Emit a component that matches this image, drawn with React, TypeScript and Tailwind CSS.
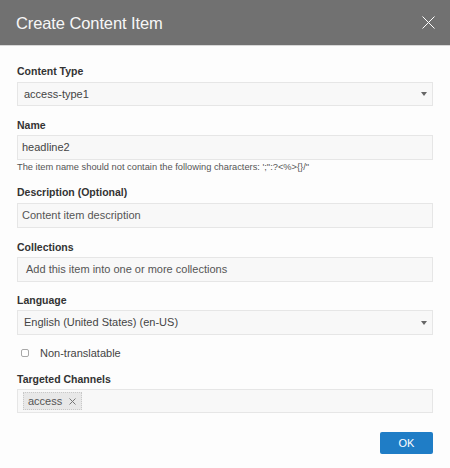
import React from "react";

const font = { fontFamily: '"Liberation Sans", Arial, sans-serif' };

function Label({ children, className = "" }: { children: React.ReactNode; className?: string }) {
  return (
    <div className={`h-4 leading-4 text-[10.5px] font-bold text-[#333333] ${className}`}>{children}</div>
  );
}

function Caret() {
  return (
    <svg width="6" height="4" viewBox="0 0 6 4" className="shrink-0">
      <path d="M0 0 L6 0 L3 4 Z" fill="#666666" />
    </svg>
  );
}

export default function App() {
  return (
    <div style={font} className="w-[450px] h-[468px] bg-[#fdfdfd] flex flex-col overflow-hidden">
      <div className="h-[45px] bg-[#717171] flex items-center justify-between pl-4 pr-[14px] border-b border-[#d8d8d8] box-content">
        <div className="text-[16.5px] tracking-[-0.1px] text-[#f7f7f7] leading-none pt-px">Create Content Item</div>
        <svg width="13" height="13" viewBox="0 0 13 13" className="mr-[1px]">
          <path d="M0.5 0.5 L12.5 12.5 M12.5 0.5 L0.5 12.5" stroke="#ffffff" strokeWidth="1" fill="none" />
        </svg>
      </div>

      <div className="flex flex-col px-[17px] pt-[17px]">
        <Label>Content Type</Label>
        <div className="mt-[3px] h-[24px] bg-[#f8f8f8] border border-[#e6e6e6] flex items-center justify-between pl-[6px] pr-[5px]">
          <span className="text-[11px] text-[#444444]">access-type1</span>
          <Caret />
        </div>

        <Label className="mt-[11px]">Name</Label>
        <div className="mt-[2px] h-[25px] bg-[#f8f8f8] border border-[#e6e6e6] flex items-center pl-[4px]">
          <span className="text-[11px] text-[#444444]">headline2</span>
        </div>
        <div className="h-[12px] leading-[12px] text-[9.3px] text-[#555555] mt-px">
          The item name should not contain the following characters: &apos;;&quot;:?&lt;%&gt;{"{}"}/&quot;
        </div>

        <Label className="mt-[11px]">Description (Optional)</Label>
        <div className="mt-[3px] h-[25px] bg-[#f8f8f8] border border-[#e6e6e6] flex items-center pl-[4px]">
          <span className="text-[11px] text-[#555555]">Content item description</span>
        </div>

        <Label className="mt-[11px]">Collections</Label>
        <div className="mt-[2px] h-[25px] bg-[#f8f8f8] border border-[#e6e6e6] flex items-center pl-[8px]">
          <span className="text-[11px] text-[#555555]">Add this item into one or more collections</span>
        </div>

        <Label className="mt-[10px]">Language</Label>
        <div className="mt-[2px] h-[25px] bg-[#f8f8f8] border border-[#e6e6e6] flex items-center justify-between pl-[6px] pr-[5px]">
          <span className="text-[11px] text-[#444444]">English (United States) (en-US)</span>
          <Caret />
        </div>

        <div className="mt-[10px] h-4 flex items-center">
          <div className="ml-[4px] w-[8px] h-[8px] border border-[#a8a8a8] rounded-[2px] bg-white" />
          <span className="ml-[11px] text-[11px] text-[#444444]">Non-translatable</span>
        </div>

        <Label className="mt-[10px]">Targeted Channels</Label>
        <div className="mt-[2px] h-[24px] bg-[#f8f8f8] border border-[#e6e6e6] flex items-center pl-[5px]">
          <div className="h-[18px] flex items-center bg-[#e8e8e8] border border-dotted border-[#c8c8c8] pl-[4px] pr-[5px]">
            <span className="text-[11px] text-[#555555]">access</span>
            <svg width="7" height="7" viewBox="0 0 7 7" className="ml-[7px]">
              <path d="M0.5 0.5 L6.5 6.5 M6.5 0.5 L0.5 6.5" stroke="#777777" strokeWidth="1" fill="none" />
            </svg>
          </div>
        </div>

        <div className="mt-[19px] flex justify-end">
          <div className="w-[53px] h-[22px] bg-[#1f7dc6] rounded-[2px] flex items-center justify-center text-[11px] text-white">
            OK
          </div>
        </div>
      </div>
    </div>
  );
}
